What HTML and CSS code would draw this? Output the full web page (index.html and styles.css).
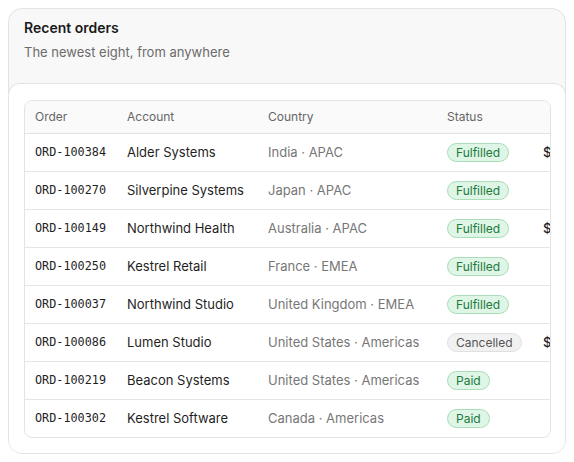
FILE: index.html
```html
<!DOCTYPE html>
<html>
<head>
    <title>Recent orders</title>
    <link rel="stylesheet" href="styles.css">
</head>
<body>
    <div class="card">
        <div class="card-header">
            <h2>Recent orders</h2>
            <p>The newest eight, from anywhere</p>
        </div>

        <div class="card-body">
            <div class="table-wrap">
                <table class="orders">
                    <thead>
                        <tr>
                            <th class="col-order">Order</th>
                            <th class="col-account">Account</th>
                            <th class="col-country">Country</th>
                            <th class="col-status">Status</th>
                            <th class="col-amount">Amount</th>
                        </tr>
                    </thead>
                    <tbody>
                        <tr>
                            <td class="mono">ORD-100384</td>
                            <td>Alder Systems</td>
                            <td class="muted">India · APAC</td>
                            <td><span class="badge fulfilled">Fulfilled</span></td>
                            <td class="amount">$12,480.00</td>
                        </tr>
                        <tr>
                            <td class="mono">ORD-100270</td>
                            <td>Silverpine Systems</td>
                            <td class="muted">Japan · APAC</td>
                            <td><span class="badge fulfilled">Fulfilled</span></td>
                            <td class="amount">$860.00</td>
                        </tr>
                        <tr>
                            <td class="mono">ORD-100149</td>
                            <td>Northwind Health</td>
                            <td class="muted">Australia · APAC</td>
                            <td><span class="badge fulfilled">Fulfilled</span></td>
                            <td class="amount">$20,265.40</td>
                        </tr>
                        <tr>
                            <td class="mono">ORD-100250</td>
                            <td>Kestrel Retail</td>
                            <td class="muted">France · EMEA</td>
                            <td><span class="badge fulfilled">Fulfilled</span></td>
                            <td class="amount">$742.90</td>
                        </tr>
                        <tr>
                            <td class="mono">ORD-100037</td>
                            <td>Northwind Studio</td>
                            <td class="muted">United Kingdom · EMEA</td>
                            <td><span class="badge fulfilled">Fulfilled</span></td>
                            <td class="amount">$11,410.10</td>
                        </tr>
                        <tr>
                            <td class="mono">ORD-100086</td>
                            <td>Lumen Studio</td>
                            <td class="muted">United States · Americas</td>
                            <td><span class="badge cancelled">Cancelled</span></td>
                            <td class="amount">$14,920.00</td>
                        </tr>
                        <tr>
                            <td class="mono">ORD-100219</td>
                            <td>Beacon Systems</td>
                            <td class="muted">United States · Americas</td>
                            <td><span class="badge paid">Paid</span></td>
                            <td class="amount">$530.20</td>
                        </tr>
                        <tr>
                            <td class="mono">ORD-100302</td>
                            <td>Kestrel Software</td>
                            <td class="muted">Canada · Americas</td>
                            <td><span class="badge paid">Paid</span></td>
                            <td class="amount">$688.00</td>
                        </tr>
                    </tbody>
                </table>
            </div>
        </div>
    </div>
</body>
</html>
```

FILE: styles.css
```css
body {
    font-family: Inter, "Open Sans", sans-serif;
    margin: 0;
    padding: 8px;
    background-color: #ffffff;
    color: #1f1f1f;
}

.card {
    width: 558px;
    height: 446px;
    box-sizing: border-box;
    background-color: #f8f8f8;
    border: 1px solid #e3e3e3;
    border-radius: 14px;
    display: flex;
    flex-direction: column;
    overflow: hidden;
}

.card-header {
    padding: 10px 15px 0 15px;
    height: 74px;
    box-sizing: border-box;
}

.card-header h2 {
    margin: 0;
    font-size: 14px;
    font-weight: 600;
    line-height: 18px;
    color: #1a1a1a;
}

.card-header p {
    margin: 6px 0 0 0;
    font-size: 13px;
    line-height: 18px;
    color: #6b6b6b;
}

.card-body {
    flex: 1;
    background-color: #ffffff;
    border-top: 1px solid #e3e3e3;
    border-radius: 12px 12px 0 0;
    margin: 0 -1px;
    border-left: 1px solid #e3e3e3;
    border-right: 1px solid #e3e3e3;
    padding: 16px 15px 0 15px;
}

.table-wrap {
    border: 1px solid #e3e3e3;
    border-radius: 8px;
    overflow: hidden;
    width: 527px;
    box-sizing: border-box;
}

.orders {
    border-collapse: collapse;
    table-layout: fixed;
    width: 596px;
    font-size: 13px;
}

.orders th,
.orders td {
    box-sizing: border-box;
}

.orders th {
    text-align: left;
    font-weight: 400;
    font-size: 12px;
    color: #666666;
    background-color: #fafafa;
    height: 32px;
    padding: 0 10px;
    border-bottom: 1px solid #e3e3e3;
}

.orders td {
    height: 38px;
    padding: 0 10px;
    border-bottom: 1px solid #e6e6e6;
    white-space: nowrap;
    color: #1f1f1f;
}

.orders tbody tr:last-child td {
    border-bottom: none;
}

.col-order { width: 92px; }
.col-account { width: 141px; }
.col-country { width: 179px; }
.col-status { width: 96px; }
.col-amount { width: 88px; text-align: right !important; }

.mono {
    font-family: "DejaVu Sans Mono", monospace;
    font-size: 11.8px;
    color: #222222;
}

.muted {
    color: #777777 !important;
}

.amount {
    text-align: right;
    font-weight: 500;
    font-variant-numeric: proportional-nums;
}

.badge {
    display: inline-block;
    font-size: 12px;
    line-height: 17px;
    padding: 0 8px;
    border-radius: 10px;
    border: 1px solid;
}

.fulfilled,
.paid {
    background-color: #dff5e6;
    border-color: #a9dcb9;
    color: #1c7a3d;
}

.cancelled {
    background-color: #f1f1f1;
    border-color: #e0e0e0;
    color: #555555;
}
```
